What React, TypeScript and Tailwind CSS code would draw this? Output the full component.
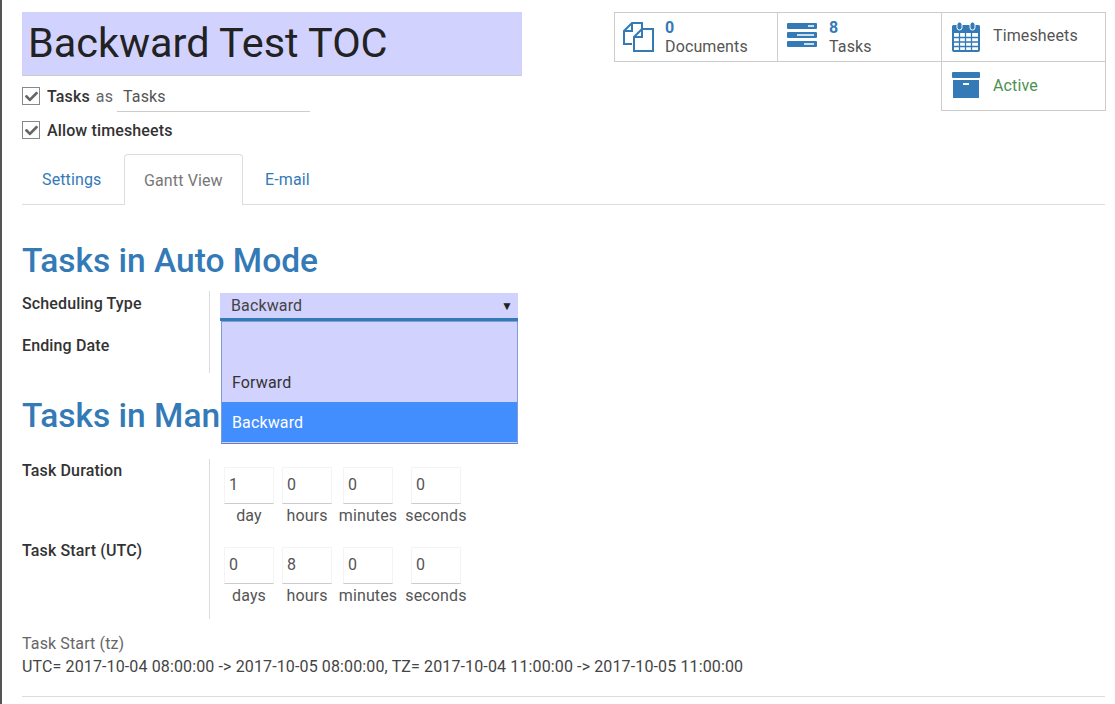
import { FaCheck } from "react-icons/fa";

const DocumentsIcon = () => (
  <svg width="31" height="31" viewBox="0 0 31 31" fill="none" stroke="#337ab7" strokeWidth="2">
    <path d="M9 23H1V10l8-8h10v10" />
    <path d="M9 2v8H1" />
    <path d="M11 30V16l8-8h11v22z" fill="#fff" />
    <path d="M19 8v8h-8" />
  </svg>
);

const TasksIcon = () => (
  <svg width="30" height="24" viewBox="0 0 30 24" fill="#337ab7">
    <rect x="0" y="0" width="30" height="6" rx="1" />
    <rect x="0" y="9" width="30" height="6" rx="1" />
    <rect x="0" y="18" width="30" height="6" rx="1" />
    <rect x="21" y="2.25" width="6" height="1.5" fill="#fff" />
    <rect x="10" y="11.25" width="17" height="1.5" fill="#fff" />
    <rect x="17" y="20.25" width="10" height="1.5" fill="#fff" />
  </svg>
);

const CalendarIcon = () => (
  <svg width="28" height="30" viewBox="0 0 28 30" fill="none">
    <path d="M1.5 3h25a1.5 1.5 0 0 1 1.5 1.5V28a2 2 0 0 1-2 2H2a2 2 0 0 1-2-2V4.5A1.5 1.5 0 0 1 1.5 3z" fill="#337ab7" />
    <rect x="5" y="0" width="5" height="8" rx="2.5" fill="#337ab7" stroke="#fff" />
    <rect x="18" y="0" width="5" height="8" rx="2.5" fill="#337ab7" stroke="#fff" />
    <rect x="2" y="11" width="24" height="17" fill="#fff" />
    <path d="M2 15.5h24M2 20h24M2 24.5h24M7.5 11v17M13.5 11v17M19.5 11v17" stroke="#337ab7" strokeWidth="1.3" />
  </svg>
);

const ArchiveIcon = () => (
  <svg width="28" height="26" viewBox="0 0 28 26" fill="#337ab7" className="mb-[2px]">
    <rect x="0" y="0" width="28" height="6" rx="1" />
    <rect x="1" y="8" width="26" height="18" />
    <rect x="11" y="11" width="6" height="2" fill="#fff" />
  </svg>
);

const CheckBox = () => (
  <span className="mb-[2px] flex h-[18px] w-[18px] items-center justify-center border border-[#888] bg-white">
    <FaCheck size={13} className="text-[#666]" />
  </span>
);

const DurationField = ({ value, label, cls }: { value: string; label: string; cls: string }) => (
  <div className={`flex w-[50px] flex-col items-center ${cls}`}>
    <div className="h-[37px] w-[50px] border border-[#f4f4f4] border-b-[#ccc] pl-[4px] pt-[6px] leading-[22px] text-[#555]">
      {value}
    </div>
    <span className="mt-[1px] leading-[22px] whitespace-nowrap text-[#555]">{label}</span>
  </div>
);

const DurationRow = ({ rows }: { rows: [string, string][] }) => (
  <div className="flex">
    <DurationField value={rows[0][0]} label={rows[0][1]} cls="mr-[8px]" />
    <DurationField value={rows[1][0]} label={rows[1][1]} cls="mr-[11px]" />
    <DurationField value={rows[2][0]} label={rows[2][1]} cls="mr-[18px]" />
    <DurationField value={rows[3][0]} label={rows[3][1]} cls="" />
  </div>
);

export default function App() {
  return (
    <div
      className="h-[704px] w-full overflow-hidden border-l-2 border-[#555] bg-white text-[16px] tracking-[0.13px] text-[#444]"
      style={{ fontFamily: "Roboto, sans-serif" }}
    >
      <div className="w-[1104px] pl-[20px] pt-[12px]">
        <div className="flex justify-between">
          <div>
            <div className="flex h-[64px] w-[500px] items-center border-b border-[#ccc] bg-[#d2d2ff] pl-[6px] text-[41.4px] leading-none tracking-normal text-[#222]">
              Backward Test TOC
            </div>
            <div className="mt-[7px] flex h-[28px] items-center">
              <CheckBox />
              <span className="ml-[7px] font-medium text-[#333]">Tasks</span>
              <span className="ml-[6px] text-[#666]">as</span>
              <span className="ml-[4px] flex h-[29px] w-[193px] shrink-0 items-center border-b border-[#ccc] pl-[6px] text-[#555]">
                Tasks
              </span>
            </div>
            <div className="mt-[6px] flex h-[28px] items-center">
              <CheckBox />
              <span className="ml-[7px] font-medium text-[#333]">Allow timesheets</span>
            </div>
          </div>
          <div className="grid h-[99px] w-[492px] grid-cols-[164px_164px_164px] grid-rows-[50px_49px]">
            <div className="flex border border-[#ccc] pl-[8px] pt-[8px]">
              <DocumentsIcon />
              <div className="-mt-[3px] ml-[11px] leading-[19px]">
                <div className="font-bold text-[#337ab7]">0</div>
                <div className="text-[#555]">Documents</div>
              </div>
            </div>
            <div className="flex border-y border-r border-[#ccc] pl-[9px] pt-[10px]">
              <TasksIcon />
              <div className="-mt-[5px] ml-[12px] leading-[19px]">
                <div className="font-bold text-[#337ab7]">8</div>
                <div className="text-[#555]">Tasks</div>
              </div>
            </div>
            <div className="flex items-center border-y border-r border-[#ccc] pl-[10px]">
              <CalendarIcon />
              <span className="-mt-[3px] ml-[13px] text-[#555]">Timesheets</span>
            </div>
            <div className="col-start-3 flex items-center border-x border-b border-[#ccc] pl-[10px] -ml-[1px]">
              <ArchiveIcon />
              <span className="ml-[13px] text-[#4c9150]">Active</span>
            </div>
          </div>
        </div>

        <div className="mr-[1px] mt-[9px] flex h-[51px] border-b border-[#ddd]">
          <div className="w-[102px] pl-[20px] pt-[14px] text-[#337ab7]">Settings</div>
          <div className="h-[51px] w-[119px] rounded-t-[4px] border border-b-0 border-[#ddd] bg-white pl-[19px] pt-[14px] text-[#777]">
            Gantt View
          </div>
          <div className="pl-[22px] pt-[14px] text-[#337ab7]">E-mail</div>
        </div>

        <h1 className="mt-[36px] text-[33.5px] leading-[40px] font-medium tracking-normal text-[#337ab7]">Tasks in Auto Mode</h1>

        <div className="relative mt-[10px] flex h-[82px]">
          <div className="w-[188px] border-r border-[#ddd] pt-[2px]">
            <div className="font-medium leading-[22px] text-[#333]">Scheduling Type</div>
            <div className="mt-[20px] font-medium leading-[22px] text-[#333]">Ending Date</div>
          </div>
          <div className="ml-[10px] mt-[2px] flex h-[28px] w-[298px] items-center justify-between border-b-[3px] border-[#337ab7] bg-[#d2d2ff] pl-[11px] pr-[5px]">
            <span className="text-[#444]">Backward</span>
            <span className="text-[12px] text-[#222]">▼</span>
          </div>
          <div className="absolute left-[199px] top-[30px] z-10 h-[123px] w-[297px] border border-[#7f9bd8] border-b-[#6a7fb5] bg-[#d2d2ff]">
            <div className="h-[40px]" />
            <div className="flex h-[40px] items-center pl-[10px] pt-[2px] text-[#333]">Forward</div>
            <div className="flex h-[40px] items-center bg-[#428eff] pl-[10px] pt-[2px] text-white">Backward</div>
          </div>
        </div>

        <h1 className="mt-[23px] text-[33.5px] leading-[40px] font-medium tracking-normal text-[#337ab7]">Tasks in Manual Mode</h1>

        <div className="mt-[23px] flex h-[160px]">
          <div className="w-[188px] border-r border-[#ddd] pt-[1px]">
            <div className="font-medium leading-[22px] text-[#333]">Task Duration</div>
            <div className="mt-[58px] font-medium leading-[22px] text-[#333]">Task Start (UTC)</div>
          </div>
          <div className="ml-[14px] flex flex-col gap-[20px] pt-[8px]">
            <DurationRow rows={[["1", "day"], ["0", "hours"], ["0", "minutes"], ["0", "seconds"]]} />
            <DurationRow rows={[["0", "days"], ["8", "hours"], ["0", "minutes"], ["0", "seconds"]]} />
          </div>
        </div>

        <div className="mt-[14px] leading-[22px] text-[#666]">Task Start (tz)</div>
        <div className="mt-[1px] leading-[22px] text-[#444]">
          UTC= 2017-10-04 08:00:00 -&gt; 2017-10-05 08:00:00, TZ= 2017-10-04 11:00:00 -&gt; 2017-10-05 11:00:00
        </div>
        <div className="mr-[1px] mt-[18px] border-b border-[#ddd]" />
      </div>
    </div>
  );
}
